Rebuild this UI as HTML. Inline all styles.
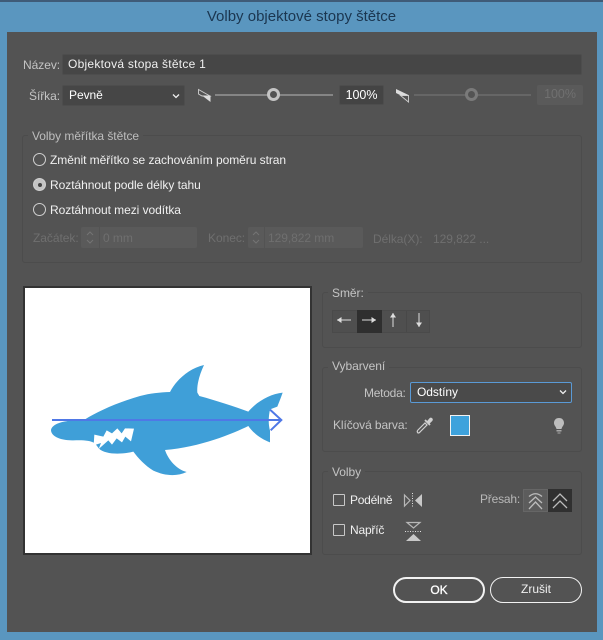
<!DOCTYPE html>
<html lang="cs"><head><meta charset="utf-8"><title>Volby objektové stopy štětce</title>
<style>
html,body{margin:0;padding:0;width:603px;height:640px;overflow:hidden;background:#5a96bf}
body{position:relative;font-family:"Liberation Sans",sans-serif;font-size:12px;color:#f0f0f0}
.a{position:absolute;box-sizing:border-box;white-space:nowrap}
.t{line-height:16px;height:16px;letter-spacing:-.05px}
.lab{color:#c4c4c4}
.dim{color:#6f6f6f}
.grp{border:1px solid #4c4c4c;border-radius:3px}
.fld{background:#464646;border:1px solid #4d4d4d;border-radius:2px}
.dis{background:#5a5a5a;border-radius:2px}
.radio{width:13px;height:13px;border:1px solid #d0d0d0;border-radius:50%}
.chk{width:12px;height:12px;border:1px solid #c8c8c8;border-radius:1px}
.btn{border:2px solid #f2f2f2;border-radius:13px;height:26px;text-align:center;line-height:22px}
svg{position:absolute;overflow:visible}
</style></head><body>
<div class="a" style="left:0;top:0;width:603px;height:2px;background:#3f5b78"></div>
<div class="a" style="left:0;top:8px;width:603px;text-align:center;font-size:15px;line-height:18px;color:#1b3650">Volby objektové stopy štětce</div>
<div class="a" style="left:7px;top:32px;width:590px;height:600px;background:#535353"></div>

<div class="a t lab" style="left:23px;top:57px">Název:</div>
<div class="a fld t" style="left:62px;top:54px;width:520px;height:21px;line-height:19px;padding-left:5px;font-size:12px;color:#f0f0f0;letter-spacing:.25px">Objektová stopa štětce 1</div>
<div class="a t lab" style="left:29px;top:88px">Šířka:</div>
<div class="a fld t" style="left:62px;top:85px;width:123px;height:21px;line-height:19px;padding-left:6px;color:#fff">Pevně</div>
<svg style="left:170px;top:91px" width="12" height="10"><path d="M3 3.5L6 6.5L9 3.5" fill="none" stroke="#eee" stroke-width="1.3"/></svg>
<svg style="left:197px;top:89px" width="15" height="14"><path d="M1.500 .5V5L5 7H13L1.500 .5Z" fill="none" stroke="#d0d0d0" stroke-width=".9"/><path d="M5 6.500H13.500V13Z" fill="#dcdcdc"/></svg>
<div class="a" style="left:215px;top:94px;width:118px;height:2px;background:#858585"></div>
<div class="a" style="left:267px;top:88px;width:13px;height:13px;border:3px solid #c4c4c4;border-radius:50%;background:#535353"></div>
<div class="a fld t" style="left:339px;top:85px;width:45px;height:20px;line-height:19px;text-align:center;color:#fff;font-size:12.5px;background:#444">100%</div>
<svg style="left:396px;top:89px" width="15" height="14"><path d="M0 0L12.500 6H4L0 4Z" fill="#dcdcdc"/><path d="M4.500 6.500H12.500V13Z" fill="none" stroke="#d0d0d0" stroke-width=".9"/></svg>
<div class="a" style="left:414px;top:94px;width:117px;height:2px;background:#666"></div>
<div class="a" style="left:465px;top:88px;width:13px;height:13px;border:3px solid #7a7a7a;border-radius:50%;background:#535353"></div>
<div class="a dis t dim" style="left:537px;top:85px;width:46px;height:20px;line-height:19px;text-align:center;font-size:12.5px;color:#707070">100%</div>

<div class="a grp" style="left:22px;top:135px;width:560px;height:128px"></div>
<div class="a t lab" style="left:28px;top:128px;background:#535353;padding:0 4px;color:#bdbdbd">Volby měřítka štětce</div>
<div class="a radio" style="left:33px;top:153px"></div>
<div class="a t" style="left:50px;top:152px">Změnit měřítko se zachováním poměru stran</div>
<div class="a radio" style="left:33px;top:178px;background:#c4c4c4"></div>
<div class="a" style="left:38px;top:183px;width:4px;height:4px;border-radius:50%;background:#444"></div>
<div class="a t" style="left:50px;top:177px">Roztáhnout podle délky tahu</div>
<div class="a radio" style="left:33px;top:203px"></div>
<div class="a t" style="left:50px;top:202px">Roztáhnout mezi vodítka</div>

<div class="a t dim" style="left:33px;top:230px">Začátek:</div>
<div class="a dis" style="left:81px;top:227px;width:116px;height:21px"></div>
<div class="a" style="left:99px;top:227px;width:1px;height:21px;background:#535353"></div>
<svg style="left:84px;top:230px" width="12" height="16"><path d="M3 5L6 2L9 5M3 10L6 13L9 10" fill="none" stroke="#747474"/></svg>
<div class="a t dim" style="left:103px;top:230px">0 mm</div>
<div class="a t dim" style="left:208px;top:230px">Konec:</div>
<div class="a dis" style="left:248px;top:227px;width:115px;height:21px"></div>
<div class="a" style="left:264px;top:227px;width:1px;height:21px;background:#535353"></div>
<svg style="left:250px;top:230px" width="12" height="16"><path d="M3 5L6 2L9 5M3 10L6 13L9 10" fill="none" stroke="#747474"/></svg>
<div class="a t dim" style="left:268px;top:230px">129,822 mm</div>
<div class="a t dim" style="left:373px;top:231px">Délka(X):</div>
<div class="a t dim" style="left:433px;top:231px">129,822 ...</div>

<div class="a" style="left:23px;top:286px;width:289px;height:269px;background:#fff;border:2px solid #333"></div>
<svg style="left:40px;top:350px" width="250" height="130" viewBox="0 0 750 390">
<path fill="#3f9fd8" d="M33 240C36 224 60 216 90 212L135 208C170 186 230 158 300 138C330 130 360 127 390 126C405 95 445 55 492 45C478 75 470 105 472 128L478 138C530 152 585 170 625 185C650 155 690 132 728 128C722 145 718 155 712 170L690 178C686 198 684 220 690 242L690 277C665 268 640 250 625 228C580 250 480 292 375 300C385 330 410 358 440 366C410 380 375 378 340 362C315 347 295 325 280 305C245 314 195 314 177 296L165 280C150 270 125 270 100 271C60 272 33 258 33 240Z"/>
<path fill="#fff" d="M163 254L190 260L200 241L216 250L232 235L245 250L255 235L282 236L273 274L256 260L246 277L230 265L216 284L205 271L176 297L183 279L161 286Z"/>
<path fill="none" stroke="#4f78e6" stroke-width="6" d="M36 210H722M690 179L724 210L692 241"/>
</svg>

<div class="a grp" style="left:322px;top:292px;width:260px;height:56px"></div>
<div class="a t lab" style="left:328px;top:285px;background:#535353;padding:0 4px">Směr:</div>
<div class="a" style="left:332px;top:310px;width:98px;height:23px;background:#4f4f4f;border:1px solid #4a4a4a"></div>
<div class="a" style="left:357px;top:310px;width:25px;height:23px;background:#2f2f2f"></div>
<div class="a" style="left:406px;top:311px;width:1px;height:21px;background:#484848"></div>
<svg style="left:332px;top:310px" width="98" height="23" fill="#ddd"><path d="M5 9.500H19V10.500H5Z"/><path d="M5 10L9.500 7V13Z"/><path d="M30 9.500H44V10.500H30Z"/><path d="M44 10L39.500 7V13Z"/><path d="M60.500 3H61.500V17H60.500Z"/><path d="M61 3L58 7.500H64Z"/><path d="M86.500 3H87.500V17H86.500Z"/><path d="M87 17L84 12.500H90Z"/></svg>

<div class="a grp" style="left:322px;top:367px;width:260px;height:85px"></div>
<div class="a t lab" style="left:328px;top:358px;background:#535353;padding:0 4px">Vybarvení</div>
<div class="a t lab" style="left:364px;top:385px;letter-spacing:-.25px">Metoda:</div>
<div class="a t" style="left:410px;top:382px;width:162px;height:21px;line-height:19px;border:1px solid #5a9ad6;border-radius:2px;padding-left:6px;color:#fff;background:#4a4a4a;box-sizing:border-box">Odstíny</div>
<svg style="left:557px;top:387px" width="12" height="10"><path d="M3 3.500L6 6.500L9 3.500" fill="none" stroke="#eee" stroke-width="1.300"/></svg>
<div class="a t lab" style="left:333px;top:417px;letter-spacing:-.1px">Klíčová barva:</div>
<svg style="left:416px;top:416px" width="18" height="19" fill="none" stroke="#d0d0d0"><path d="M2 17C1 16 1 15 2 14L9 7L11 9L4 16C3.500 17 3 17 2 17Z" stroke-width="1.200"/><path d="M9 4L14 9" stroke-width="1.800"/><path d="M11 6L14 2.500C15 1.500 17 3 16 4.500L13 7.500Z" fill="#d0d0d0"/></svg>
<div class="a" style="left:450px;top:415px;width:20px;height:21px;background:#3ea2dc;border:1px solid #f2f2f2"></div>
<svg style="left:552px;top:417px" width="14" height="18"><path d="M7 1C3.500 1 2 3.500 2 6C2 8.500 4 9.500 4.500 12H9.500C10 9.500 12 8.500 12 6C12 3.500 10.500 1 7 1Z" fill="#bdbdbd"/><path d="M4.500 13H9.500V14.500H4.500ZM5.500 15.500H8.500V16.500H5.500Z" fill="#a8a8a8"/></svg>

<div class="a grp" style="left:322px;top:471px;width:260px;height:84px"></div>
<div class="a t lab" style="left:328px;top:464px;background:#535353;padding:0 4px">Volby</div>
<div class="a chk" style="left:333px;top:494px"></div>
<div class="a t" style="left:350px;top:492px;letter-spacing:-.25px">Podélně</div>
<svg style="left:403px;top:492px" width="20" height="17"><path d="M1.500 3L7 8.500L1.500 14Z" fill="none" stroke="#b8b8b8" stroke-width="1.200"/><path d="M19 2V15L12 8.500Z" fill="#c8c8c8"/><path d="M9.500 1V16" stroke="#e0e0e0" stroke-dasharray="1 1.500"/></svg>
<div class="a t lab" style="left:480px;top:491px;color:#b8b8b8;letter-spacing:-.2px">Přesah:</div>
<div class="a" style="left:523px;top:489px;width:25px;height:23px;background:#5c5c5c;border:1px solid #666"></div>
<div class="a" style="left:548px;top:489px;width:24px;height:23px;background:#303030"></div>
<svg style="left:523px;top:489px" width="49" height="23" fill="none" stroke="#bcbcbc" stroke-width="1.300"><path d="M6 7.500Q12.500 2 19 7.500"/><path d="M6 14L12.500 8L19 14M6 20L12.500 13L19 20"/><path d="M30 12L37 5L44 12M30 19L37 12L44 19"/></svg>
<div class="a chk" style="left:333px;top:524px"></div>
<div class="a t" style="left:350px;top:522px;letter-spacing:-.2px">Napříč</div>
<svg style="left:403px;top:521px" width="20" height="21"><path d="M4 1.500H17L10.500 7Z" fill="none" stroke="#b8b8b8" stroke-width="1.200"/><path d="M2 10.500H19" stroke="#e0e0e0" stroke-dasharray="1 1.500"/><path d="M10.500 13L18 20H3Z" fill="#c8c8c8"/></svg>

<div class="a btn" style="left:393px;top:577px;width:92px;color:#fff;font-size:12px;-webkit-text-stroke:.3px #fff">OK</div>
<div class="a btn" style="left:490px;top:577px;width:92px;border-width:1.500px;color:#f0f0f0;line-height:23px">Zrušit</div>
</body></html>
